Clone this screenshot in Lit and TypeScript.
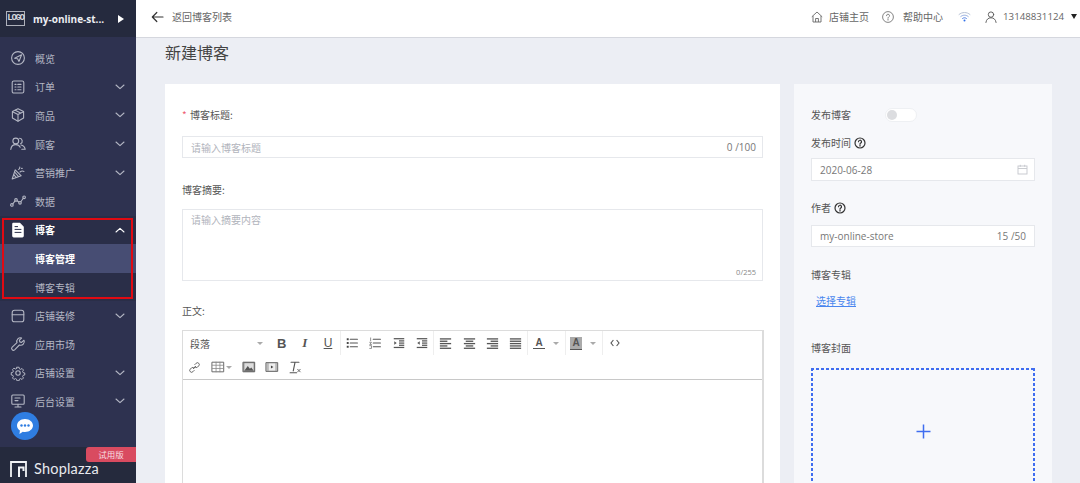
import { LitElement, html, css, svg } from "lit";
import { customElement } from "lit/decorators.js";

const ic = (w: number, body: unknown, cls = "ic") =>
  html`<svg class=${cls} width=${w} height=${w} viewBox="0 0 16 16" fill="none" stroke="currentColor" stroke-width="1.1" stroke-linecap="round" stroke-linejoin="round">${body}</svg>`;

const menuIcons: Record<string, unknown> = {
  overview: svg`<circle cx="8" cy="8" r="6.4"/><path d="M4.600 8.200 11.600 4.800 9 11.400 7.600 8.800Z"/>`,
  order: svg`<rect x="2.200" y="2" width="11.600" height="12" rx="1.600"/><path d="M5 5.400h1M5 8h1M5 10.700h1M7.800 5.400h3.200M7.800 8h3.200M7.800 10.700h3.200"/>`,
  goods: svg`<path d="M8 1.800 13.600 4.600V11L8 14.200 2.400 11V4.600Z"/><path d="M2.600 4.800 8 7.600 13.400 4.800M8 7.600v6.400M5.200 3.200l5.400 2.900"/>`,
  customer: svg`<circle cx="5.800" cy="5" r="2.900"/><path d="M.8 13.400c.3-3 2.300-4.800 5-4.800 2.200 0 3.600 1 4.400 2.700"/><path d="M9.600 2.300a2.900 2.900 0 0 1 1 5.500M11 9c2.400.3 3.700 1.900 4.200 4.300H11.800"/>`,
  marketing: svg`<path d="M5.200 4.800 2.200 14l9-3.200Z"/><path d="M3.700 9.600 6 12.200M4.600 7 8.400 11.400M8.600 4.400c1-.4 1.400-1.200 1.200-2.400M10 7c1.300-1 2.600-1.200 4-.6M11.600 3.400h.6"/>`,
  data: svg`<circle cx="1.900" cy="11.900" r="1.300"/><circle cx="6" cy="6.900" r="1.300"/><circle cx="10" cy="9.800" r="1.300"/><circle cx="14.100" cy="4.300" r="1.300"/><path d="M2.800 10.900 5.100 7.900M7.100 7.700 8.900 9M10.800 8.800 13.300 5.300"/>`,
  blog: svg`<path d="M3 1.400h6.800L13.200 4.800V14a.9.9 0 0 1-.9.9H3.700a.9.9 0 0 1-.9-.9V2.200A.8.8 0 0 1 3 1.400Z" fill="#fff" stroke="#fff"/><path d="M5 7.400h6M5 10.400h6" stroke="#2b2f4a" stroke-width="1"/><path d="M5 4.600h2.600" stroke="#2b2f4a" stroke-width="1"/>`,
  decorate: svg`<rect x="2.200" y="2.200" width="11.600" height="11.600" rx="2.400"/><path d="M2.200 6.800h11.600"/>`,
  apps: svg`<path d="M14 4.200 11.600 6.400 9.800 5.900 9.400 4.200 11.600 2A3.600 3.600 0 0 0 7 6.600L2.200 11.200A1.700 1.700 0 0 0 4.600 13.800L9.400 9A3.600 3.600 0 0 0 14 4.200Z"/>`,
  settings: svg`<circle cx="8" cy="8" r="2.200"/><path d="M6.800 1.600h2.400l.4 1.800 1.300.6 1.600-1 1.600 1.700-1 1.600.6 1.300 1.800.4v2.200l-1.800.4-.6 1.300 1 1.600-1.600 1.700-1.600-1-1.300.6-.4 1.800H6.800l-.4-1.800-1.300-.6-1.600 1-1.600-1.700 1-1.600-.6-1.300-1.800-.4V7.600l1.800-.4.6-1.300-1-1.600 1.600-1.700 1.600 1 1.300-.6Z" transform="translate(.8 .8) scale(.9)"/>`,
  admin: svg`<rect x="1.800" y="2" width="12.400" height="9.200" rx="1"/><path d="M8 11.200V14M5 14h6M5 5h5M5 7.600h3"/>`,
};

const chevron = (up = false) =>
  html`<svg class="chev" width="10" height="6" viewBox="0 0 10 6" fill="none" stroke="currentColor" stroke-width="1.1" stroke-linecap="round" stroke-linejoin="round"><path d=${up ? "M1 5 5 1.400 9 5" : "M1 1 5 4.600 9 1"}/></svg>`;

const bar = (lines: [number, number][]) =>
  svg`${lines.map(([x, w], i) => svg`<rect x=${x} y=${2.4 + i * 2.5} width=${w} height="1.400" fill="#555" stroke="none"/>`)}`;

const tool: Record<string, unknown> = {
  ul: svg`<rect x="2" y="2.600" width="2.200" height="2.200" fill="#444" stroke="none"/><rect x="2" y="6.900" width="2.200" height="2.200" fill="#444" stroke="none"/><rect x="2" y="11.200" width="2.200" height="2.200" fill="#444" stroke="none"/><path d="M6 3.700h8.200M6 8h8.200M6 12.300h8.200" stroke="#555" stroke-width="1.300"/>`,
  ol: svg`<path d="M3 2.200v3.200M2 7.200h2l-2 2.400h2M2 11h2v3.200H2" stroke="#777" stroke-width=".9"/><path d="M6 3.700h8.200M6 8h8.200M6 12.300h8.200" stroke="#555" stroke-width="1.300"/>`,
  indent: svg`${bar([[2, 12], [8, 6], [8, 6], [8, 6], [2, 12]])}<path d="M2.600 6 5.400 8 2.600 10Z" fill="#555" stroke="none"/>`,
  outdent: svg`${bar([[2, 12], [8, 6], [8, 6], [8, 6], [2, 12]])}<path d="M5.400 6 2.600 8 5.400 10Z" fill="#555" stroke="none"/>`,
  left: bar([[2, 12], [2, 8], [2, 12], [2, 8], [2, 12]]),
  center: bar([[2, 12], [4, 8], [2, 12], [4, 8], [2, 12]]),
  right: bar([[2, 12], [6, 8], [2, 12], [6, 8], [2, 12]]),
  justify: bar([[2, 12], [2, 12], [2, 12], [2, 12], [2, 12]]),
  link: svg`<path d="M9.400 6.600 6.600 9.400" stroke="#555"/><path d="M8.400 4.400 10 2.800a2.200 2.200 0 0 1 3.200 3.200L11.600 7.600a2.200 2.200 0 0 1-3-.2M7.600 11.600 6 13.200A2.200 2.200 0 0 1 2.800 10L4.400 8.400a2.200 2.200 0 0 1 3 .2" stroke="#555"/>`,
  table: svg`<rect x="1.500" y="2.500" width="13" height="11" stroke="#666"/><path d="M1.500 6h13M1.500 9.700h13M5.800 2.500v11M10.200 2.500v11" stroke="#888" stroke-width=".9"/>`,
  image: svg`<rect x="1.500" y="2.500" width="13" height="11" fill="#666" stroke="#666"/><rect x="2.600" y="3.600" width="10.800" height="8.800" fill="#ddd" stroke="none"/><path d="M2.600 12.400 6.600 6.800 9 10l1.600-1.500 2.800 3.900Z" fill="#555" stroke="none"/>`,
  video: svg`<rect x="1.500" y="3" width="13" height="10" fill="#bbb" stroke="#666"/><rect x="4.400" y="4" width="7.200" height="8" fill="#eee" stroke="none"/><path d="M6.800 6.200 9.600 8 6.800 9.800Z" fill="#444" stroke="none"/>`,
  clear: svg`<path d="M3.500 2.600h9M8 2.600 6 12.400M2.400 14.600h7.400" stroke="#555" stroke-width="1.300"/><path d="M11 10.600l3 3M14 10.600l-3 3" stroke="#666"/>`,
};

const help = html`<svg class="q" width="12" height="12" viewBox="0 0 12 12" fill="none" stroke="#333" stroke-width="1.200"><circle cx="6" cy="6" r="5"/><path d="M4.500 4.700A1.500 1.500 0 1 1 6.600 6.100C6.100 6.400 6 6.600 6 7.200M6 8.300v.8" stroke-linecap="round"/></svg>`;

@customElement("app-root")
export class AppRoot extends LitElement {
  static styles = css`
    :host { display: block; height: 100vh; }
    * { box-sizing: border-box; }
    .root { display: flex; height: 483px; overflow: hidden; font-family: "Noto Sans CJK SC", "Noto Sans", sans-serif; font-size: 10px; color: #555; background: #eceef4; position: relative; }
    .side { width: 136px; flex: none; background: #2e3250; display: flex; flex-direction: column; color: #b4b7c4; position: relative; }
    .brand { height: 37px; background: #252a3e; display: flex; align-items: center; padding-left: 6px; flex: none; }
    .logo { width: 19px; height: 15px; border: 1px solid #aeb1bb; color: #d7d9df; font: 700 9px/13px "Liberation Mono", monospace; text-align: center; letter-spacing: -1.300px; white-space: nowrap; }
    .store { margin-left: 8px; width: 67px; color: #eceef2; font: 700 10px "Open Sans", sans-serif; white-space: nowrap; }
    .play { margin-left: 18px; width: 0; height: 0; border-left: 6px solid #fff; border-top: 4.500px solid transparent; border-bottom: 4.500px solid transparent; }
    nav { padding-top: 7px; flex: none; }
    .row { height: 28.6px; display: flex; align-items: center; padding-left: 10px; }
    .row .ic { margin-right: 9px; flex: none; }
    .row .lab { flex: 1; }
    .chev { margin-right: 11px; color: #b4b7c4; }
    .row.open { color: #fff; font-weight: 700; background: #2a2e48; }
    .row.open .chev { color: #fff; }
    .sub { padding-left: 35px; background: #2a2e48; }
    .sub.on { background: #474d73; color: #fff; font-weight: 700; }
    .foot { margin-top: auto; height: 36px; background: #252a3d; display: flex; align-items: flex-end; padding: 0 0 5px 10px; color: #e8e9ee; flex: none; }
    .flogo { margin-bottom: 1px; flex: none; }
    .shop { font: 400 14.500px/18px "Lato", sans-serif; margin-left: 7px; letter-spacing: .2px; }
    .trial { position: absolute; right: 0; bottom: 21px; width: 50px; height: 15px; background: #d94b60; color: #f7dfe2; font-size: 8.500px; line-height: 15px; text-align: center; border-radius: 3px 0 0 3px; }
    .chat { position: absolute; left: 11px; top: 412px; width: 28px; height: 28px; border-radius: 50%; background: #2f7de1; display: flex; align-items: center; justify-content: center; }
    .mark { position: absolute; left: 2px; top: 218px; width: 131px; height: 81px; border: 2px solid #e00a12; }
    .main { flex: 1; min-width: 0; display: flex; flex-direction: column; }
    header { height: 38px; flex: none; background: #fff; border-bottom: 1px solid #d5d7de; display: flex; align-items: center; padding: 0 3.500px 4px 15px; }
    .back { display: flex; align-items: center; gap: 8px; color: #666; flex: 1; }
    .top { display: flex; align-items: center; color: #666; }
    .user { font: 9.700px "Open Sans", sans-serif; margin-left: 6px; }
    .caret { width: 0; height: 0; margin: 0 0 0 6.500px; border-top: 5px solid #222; border-left: 3.500px solid transparent; border-right: 3.500px solid transparent; }
    .page { padding: 0 28px 0 29px; }
    h1 { margin: 0; font-size: 16px; font-weight: 400; color: #444; line-height: 22px; padding-top: 3px; height: 46px; }
    .cols { display: flex; gap: 14px; align-items: flex-start; }
    .card { background: #fff; width: 615px; height: 700px; padding: 24px 17px 0; flex: none; }
    .aside { background: #f7f8fb; width: 258px; height: 700px; padding: 24px 17px 0; flex: none; }
    .l { height: 14px; line-height: 14px; display: flex; align-items: center; gap: 3px; color: #555; }
    .req { color: #ee5d70; margin-right: 1px; width: 4px; }
    .inp { background: #fff; border: 1px solid #e6e8ec; display: flex; justify-content: space-between; align-items: center; color: #b1b4bc; padding: 0 6px 0 8px; }
    .pr { padding-right: 8px; }
    .val { color: #777; font-family: "Open Sans", sans-serif; }
    .area { height: 72px; margin-top: 12px; border: 1px solid #e6e8ec; padding: 2px 8px; color: #b1b4bc; position: relative; }
    .area small { position: absolute; right: 6px; bottom: 3px; font: 7.500px "Open Sans", sans-serif; color: #888; }
    .editor { margin: 12px -1px 0 0; height: 400px; border: 1px solid #dcdcdc; border-right: 2px solid #dcdcdc; }
    .tb { height: 49px; border-bottom: 1px solid #c8c8c8; }
    .tr { display: flex; height: 24px; align-items: center; }
    .fmt { width: 87px; height: 24px; display: flex; align-items: center; padding-left: 7px; justify-content: space-between; padding-right: 7px; color: #555; }
    .tc { width: 0; height: 0; border-top: 3px solid #aaa; border-left: 3px solid transparent; border-right: 3px solid transparent; flex: none; }
    .b { width: 23.200px; height: 24px; display: flex; align-items: center; justify-content: center; flex: none; font: 700 13px "Liberation Sans", sans-serif; color: #555; }
    .b.u { text-decoration: underline; font-size: 12px; font-weight: 400; }
    .b.i { font-style: italic; font-weight: 700; font-family: "Liberation Serif", serif; }
    .sep { width: 1px; height: 24px; background: #eee; flex: none; }
    .wide { width: 37px; gap: 8px; justify-content: flex-start; padding-left: 5px; }
    .wide.g { width: 36px; padding-left: 4px; }
    .letter { width: 12px; text-align: center; font: 700 10px/11px "Liberation Sans", sans-serif; border-bottom: 1.500px solid #555; color: #555; }
    .letter.bg { background: #aaa; height: 13px; }
    .tbl { width: 31px; gap: 1px; padding-left: 5px; justify-content: flex-start; }
    .switch { width: 32px; height: 14px; margin-left: 31px; background: #fff; border: 1px solid #eef0f3; border-radius: 7px; padding: 1px; }
    .switch i { display: block; width: 10px; height: 10px; border-radius: 50%; background: #dcdde0; }
    .link { margin: 12px 0 0 5px; height: 14px; line-height: 14px; color: #4a86ee; text-decoration: underline; }
    .drop {
      margin-top: 13px; height: 126px; display: flex; align-items: center; justify-content: center;
      background:
        repeating-linear-gradient(90deg, #3f6df0 0 3px, transparent 3px 5px) left top / 100% 2px no-repeat,
        repeating-linear-gradient(90deg, #3f6df0 0 3px, transparent 3px 5px) left bottom / 100% 2px no-repeat,
        repeating-linear-gradient(180deg, #3f6df0 0 3px, transparent 3px 5px) left top / 2px 100% no-repeat,
        repeating-linear-gradient(180deg, #3f6df0 0 3px, transparent 3px 5px) right top / 2px 100% no-repeat;
    }
  `;

  private row(name: string, icon: string, arrow = true) {
    return html`<div class="row">${ic(16, menuIcons[icon])}<span class="lab">${name}</span>${arrow ? chevron() : ""}</div>`;
  }

  render() {
    return html`<div class="root">
      <aside class="side">
        <div class="brand"><div class="logo">LOGO</div><div class="store">my-online-st...</div><div class="play"></div></div>
        <nav>
          ${this.row("概览", "overview", false)}
          ${this.row("订单", "order")}
          ${this.row("商品", "goods")}
          ${this.row("顾客", "customer")}
          ${this.row("营销推广", "marketing")}
          ${this.row("数据", "data", false)}
          <div class="row open">${ic(16, menuIcons.blog)}<span class="lab">博客</span>${chevron(true)}</div>
          <div class="row sub on">博客管理</div>
          <div class="row sub">博客专辑</div>
          ${this.row("店铺装修", "decorate")}
          ${this.row("应用市场", "apps", false)}
          ${this.row("店铺设置", "settings")}
          ${this.row("后台设置", "admin")}
        </nav>
        <div class="foot">
          <svg class="flogo" width="17" height="16" viewBox="0 0 17 16" fill="none" stroke="#f2f3f6" stroke-width="1.800"><path d="M1 16V1h15v15"/><path d="M9 16V6.500h4.500V10" stroke-width="2"/></svg>
          <span class="shop">Shoplazza</span>
        </div>
        <div class="trial">试用版</div>
        <div class="chat"><svg width="18" height="17" viewBox="0 0 18 17"><path d="M9 1c4.400 0 8 2.900 8 6.500S13.400 14 9 14c-.8 0-1.500-.1-2.200-.3L3.500 16l.4-3.600C2 11.200 1 9.500 1 7.500 1 3.900 4.600 1 9 1Z" fill="#fff"/><circle cx="5.500" cy="7.500" r="1.200" fill="#2f7de1"/><circle cx="9" cy="7.500" r="1.200" fill="#2f7de1"/><circle cx="12.500" cy="7.500" r="1.200" fill="#2f7de1"/></svg></div>
        <div class="mark"></div>
      </aside>
      <div class="main">
        <header>
          <div class="back">
            <svg width="13" height="12" viewBox="0 0 13 12" fill="none" stroke="#333" stroke-width="1.200" stroke-linecap="round" stroke-linejoin="round"><path d="M12 6H1.500M5.800 1.500 1.300 6l4.500 4.500"/></svg>
            <span>返回博客列表</span>
          </div>
          <div class="top">
            <svg width="12" height="12" viewBox="0 0 12 12" fill="none" stroke="#666" stroke-width=".9" stroke-linejoin="round"><path d="M.8 5.800 6 1l5.200 4.800M2 5v6h8V5M4.600 11V7.500h2.800V11"/></svg>
            <span style="margin-left:6px">店铺主页</span>
            <svg style="margin-left:13px" width="12" height="12" viewBox="0 0 12 12" fill="none" stroke="#666" stroke-width=".8"><circle cx="6" cy="6" r="5.400"/><path d="M4.500 4.700A1.500 1.500 0 1 1 6.600 6.100C6.100 6.400 6 6.600 6 7.200M6 8.300v.8" stroke-linecap="round"/></svg>
            <span style="margin-left:9px">帮助中心</span>
            <svg style="margin-left:14.500px" width="13" height="11" viewBox="0 0 13 11" fill="none" stroke-linecap="round"><path d="M1 3.500C4.200.8 8.800.8 12 3.500" stroke="#b9c3d6"/><path d="M2.800 5.500C5 3.700 8 3.700 10.200 5.500" stroke="#8fa8dc"/><path d="M4.600 7.400C5.700 6.500 7.300 6.500 8.400 7.400" stroke="#4f7fe6"/><circle cx="6.500" cy="9.400" r="1" fill="#2f6fe8"/></svg>
            <svg style="margin-left:14.500px" width="12" height="12" viewBox="0 0 12 12" fill="none" stroke="#555" stroke-width=".9" stroke-linecap="round"><circle cx="6" cy="3.600" r="2.700"/><path d="M.9 11.500C1.300 8.400 3.300 6.800 6 6.800s4.700 1.600 5.100 4.700"/></svg>
            <span class="user">13148831124</span>
            <span class="caret"></span>
          </div>
        </header>
        <div class="page">
          <h1>新建博客</h1>
          <div class="cols">
            <section class="card">
              <div class="l"><span class="req">*</span><span>博客标题:</span></div>
              <div class="inp" style="height:22px;margin-top:14px"><span>请输入博客标题</span><span class="val">0 /100</span></div>
              <div class="l" style="margin-top:25px">博客摘要:</div>
              <div class="area">请输入摘要内容<small>0/255</small></div>
              <div class="l" style="margin-top:23px">正文:</div>
              <div class="editor">
                <div class="tb">
                  <div class="tr">
                    <div class="fmt"><span>段落</span><i class="tc"></i></div>
                    <div class="b">B</div><div class="b i">I</div><div class="b u">U</div><div class="sep"></div>
                    ${["ul", "ol", "indent", "outdent"].map((k) => html`<div class="b">${ic(14, tool[k], "t")}</div>`)}<div class="sep"></div>
                    ${["left", "center", "right", "justify"].map((k) => html`<div class="b">${ic(15, tool[k], "t")}</div>`)}<div class="sep"></div>
                    <div class="b wide"><span class="letter">A</span><i class="tc"></i></div><div class="sep"></div>
                    <div class="b wide g"><span class="letter bg">A</span><i class="tc"></i></div><div class="sep"></div>
                    <div class="b"><svg width="10" height="8" viewBox="0 0 10 8" fill="none" stroke="#555" stroke-width="1.100"><path d="M3.400 1 1 4l2.400 3M6.600 1 9 4 6.600 7"/></svg></div>
                  </div>
                  <div class="tr">
                    <div class="b">${ic(13, tool.link, "t")}</div>
                    <div class="b tbl">${ic(14, tool.table, "t")}<i class="tc"></i></div>
                    <div class="b">${ic(14, tool.image, "t")}</div>
                    <div class="b">${ic(14, tool.video, "t")}</div>
                    <div class="b">${ic(14, tool.clear, "t")}</div>
                  </div>
                </div>
              </div>
            </section>
            <section class="aside">
              <div class="l">发布博客<div class="switch"><i></i></div></div>
              <div class="l" style="margin-top:14px">发布时间 ${help}</div>
              <div class="inp val" style="height:23px;margin-top:8px"><span>2020-06-28</span>
                <svg width="11" height="11" viewBox="0 0 11 11" fill="none" stroke="#c4c6cc" stroke-width=".9"><rect x="1" y="2" width="9" height="8"/><path d="M1 4.500h9M3.300 .8v2M7.700 .8v2"/></svg></div>
              <div class="l" style="margin-top:20px">作者 ${help}</div>
              <div class="inp val pr" style="height:22px;margin-top:10px"><span>my-online-store</span><span>15 /50</span></div>
              <div class="l" style="margin-top:21px">博客专辑</div>
              <div class="link">选择专辑</div>
              <div class="l" style="margin-top:33px">博客封面</div>
              <div class="drop"><svg width="15" height="15" viewBox="0 0 15 15" stroke="#3f6df0" stroke-width="1.500"><path d="M7.500 .5v14M.5 7.500h14"/></svg></div>
            </section>
          </div>
        </div>
      </div>
    </div>`;
  }
}
